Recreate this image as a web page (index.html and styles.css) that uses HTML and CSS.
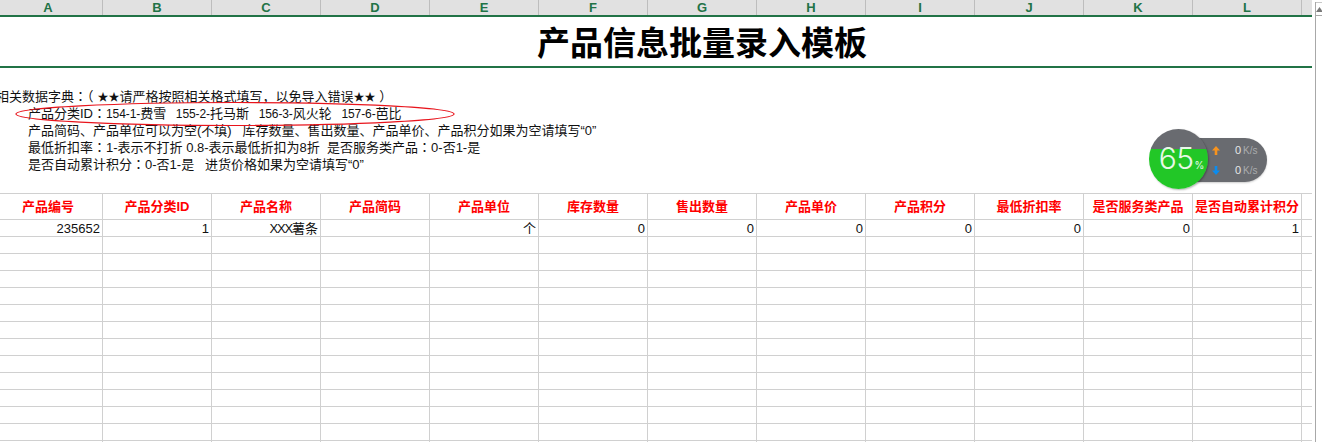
FILE: index.html
```html
<!DOCTYPE html>
<html lang="zh">
<head>
<meta charset="utf-8">
<title>产品信息批量录入模板</title>
<link rel="stylesheet" href="styles.css">
</head>
<body>
<div class="app">
  <div class="sheet">
    <div class="cols">
      <div class="col">A</div><div class="col">B</div><div class="col">C</div><div class="col">D</div><div class="col">E</div><div class="col">F</div><div class="col">G</div><div class="col">H</div><div class="col">I</div><div class="col">J</div><div class="col">K</div><div class="col">L</div><div class="col end"></div>
    </div>
    <div class="title">产品信息批量录入模板</div>
    <div class="notes">
      <div class="note first">相关数据字典<span class="colon" lang="zh-Hant">：</span>（<span class="star lead">★★</span>请严格按照相关格式填写，以免导入错误<span class="star">★★</span>&nbsp;）</div>
      <div class="note">产品分类ID<span class="colon" lang="zh-Hant">：</span><span class="lat">154-1-</span>费雪<span class="lat">&nbsp;&nbsp; 155-2-</span>托马斯<span class="lat">&nbsp;&nbsp; 156-3-</span>风火轮<span class="lat">&nbsp;&nbsp; 157-6-</span>芭比</div>
      <div class="note">产品简码、产品单位可以为空(不填)&nbsp;&nbsp; 库存数量、售出数量、产品单价、产品积分如果为空请填写“0”</div>
      <div class="note">最低折扣率<span class="colon" lang="zh-Hant">：</span>1-表示不打折 0.8-表示最低折扣为8折&nbsp; 是否服务类产品<span class="colon" lang="zh-Hant">：</span>0-否1-是</div>
      <div class="note">是否自动累计积分<span class="colon" lang="zh-Hant">：</span>0-否1-是&nbsp;&nbsp; 进货价格如果为空请填写“0”</div>
      <svg class="ellipse" width="460" height="30" viewBox="0 0 460 30"><ellipse cx="235" cy="15" rx="219" ry="11.5" fill="none" stroke="#e8141c" stroke-width="1.2"/></svg>
      <div class="widget">
        <div class="pill">
          <div class="speed"><svg class="arrow" width="8" height="9" viewBox="0 0 8 9"><path d="M4 0 8 4.5H5.3V9H2.7V4.5H0Z" fill="#f7931e"/></svg><span class="val">0</span><span class="unit">K/s</span></div>
          <div class="speed"><svg class="arrow" width="8" height="9" viewBox="0 0 8 9"><path d="M4 9 8 4.5H5.3V0H2.7V4.5H0Z" fill="#0a8cf0"/></svg><span class="val">0</span><span class="unit">K/s</span></div>
        </div>
        <div class="ball"><span class="pct">65</span><span class="sign">%</span></div>
      </div>
    </div>
    <div class="row head">
      <div class="cell">产品编号</div><div class="cell">产品分类ID</div><div class="cell">产品名称</div><div class="cell">产品简码</div><div class="cell">产品单位</div><div class="cell">库存数量</div><div class="cell">售出数量</div><div class="cell">产品单价</div><div class="cell">产品积分</div><div class="cell">最低折扣率</div><div class="cell">是否服务类产品</div><div class="cell">是否自动累计积分</div><div class="cell end"></div>
    </div>
    <div class="row">
      <div class="cell">235652</div><div class="cell">1</div><div class="cell"><span class="tight">XXX</span>薯条</div><div class="cell"></div><div class="cell">个</div><div class="cell">0</div><div class="cell">0</div><div class="cell">0</div><div class="cell">0</div><div class="cell">0</div><div class="cell">0</div><div class="cell">1</div><div class="cell end"></div>
    </div>
    <div class="row"><div class="cell"></div><div class="cell"></div><div class="cell"></div><div class="cell"></div><div class="cell"></div><div class="cell"></div><div class="cell"></div><div class="cell"></div><div class="cell"></div><div class="cell"></div><div class="cell"></div><div class="cell"></div><div class="cell end"></div></div>
    <div class="row"><div class="cell"></div><div class="cell"></div><div class="cell"></div><div class="cell"></div><div class="cell"></div><div class="cell"></div><div class="cell"></div><div class="cell"></div><div class="cell"></div><div class="cell"></div><div class="cell"></div><div class="cell"></div><div class="cell end"></div></div>
    <div class="row"><div class="cell"></div><div class="cell"></div><div class="cell"></div><div class="cell"></div><div class="cell"></div><div class="cell"></div><div class="cell"></div><div class="cell"></div><div class="cell"></div><div class="cell"></div><div class="cell"></div><div class="cell"></div><div class="cell end"></div></div>
    <div class="row"><div class="cell"></div><div class="cell"></div><div class="cell"></div><div class="cell"></div><div class="cell"></div><div class="cell"></div><div class="cell"></div><div class="cell"></div><div class="cell"></div><div class="cell"></div><div class="cell"></div><div class="cell"></div><div class="cell end"></div></div>
    <div class="row"><div class="cell"></div><div class="cell"></div><div class="cell"></div><div class="cell"></div><div class="cell"></div><div class="cell"></div><div class="cell"></div><div class="cell"></div><div class="cell"></div><div class="cell"></div><div class="cell"></div><div class="cell"></div><div class="cell end"></div></div>
    <div class="row"><div class="cell"></div><div class="cell"></div><div class="cell"></div><div class="cell"></div><div class="cell"></div><div class="cell"></div><div class="cell"></div><div class="cell"></div><div class="cell"></div><div class="cell"></div><div class="cell"></div><div class="cell"></div><div class="cell end"></div></div>
    <div class="row"><div class="cell"></div><div class="cell"></div><div class="cell"></div><div class="cell"></div><div class="cell"></div><div class="cell"></div><div class="cell"></div><div class="cell"></div><div class="cell"></div><div class="cell"></div><div class="cell"></div><div class="cell"></div><div class="cell end"></div></div>
    <div class="row"><div class="cell"></div><div class="cell"></div><div class="cell"></div><div class="cell"></div><div class="cell"></div><div class="cell"></div><div class="cell"></div><div class="cell"></div><div class="cell"></div><div class="cell"></div><div class="cell"></div><div class="cell"></div><div class="cell end"></div></div>
    <div class="row"><div class="cell"></div><div class="cell"></div><div class="cell"></div><div class="cell"></div><div class="cell"></div><div class="cell"></div><div class="cell"></div><div class="cell"></div><div class="cell"></div><div class="cell"></div><div class="cell"></div><div class="cell"></div><div class="cell end"></div></div>
    <div class="row"><div class="cell"></div><div class="cell"></div><div class="cell"></div><div class="cell"></div><div class="cell"></div><div class="cell"></div><div class="cell"></div><div class="cell"></div><div class="cell"></div><div class="cell"></div><div class="cell"></div><div class="cell"></div><div class="cell end"></div></div>
    <div class="row"><div class="cell"></div><div class="cell"></div><div class="cell"></div><div class="cell"></div><div class="cell"></div><div class="cell"></div><div class="cell"></div><div class="cell"></div><div class="cell"></div><div class="cell"></div><div class="cell"></div><div class="cell"></div><div class="cell end"></div></div>
    <div class="row"><div class="cell"></div><div class="cell"></div><div class="cell"></div><div class="cell"></div><div class="cell"></div><div class="cell"></div><div class="cell"></div><div class="cell"></div><div class="cell"></div><div class="cell"></div><div class="cell"></div><div class="cell"></div><div class="cell end"></div></div>
    <div class="row"><div class="cell"></div><div class="cell"></div><div class="cell"></div><div class="cell"></div><div class="cell"></div><div class="cell"></div><div class="cell"></div><div class="cell"></div><div class="cell"></div><div class="cell"></div><div class="cell"></div><div class="cell"></div><div class="cell end"></div></div>
  </div>
  <div class="scroll">
    <div class="gutter"></div>
    <div class="track"><div class="scroll-btn"><svg width="7" height="5" viewBox="0 0 7 5"><path d="M3.5 0 7 5H0Z" fill="#777"/></svg></div></div>
  </div>
</div>
</body>
</html>
```
FILE: styles.css
```css
html, body { margin: 0; padding: 0; background: #fff; }
body { width: 1322px; height: 442px; overflow: hidden; font-family: "Liberation Sans", "Noto Sans CJK SC", sans-serif; font-size: 13px; color: #111; }
.app { display: flex; height: 442px; overflow: hidden; }
.sheet { width: 1312px; flex: none; overflow: hidden; }
.cols { display: grid; grid-template-columns: 103px repeat(11, 109px) 1fr; height: 15px; background: #e1e1e1; }
.col { text-align: center; font-size: 13px; line-height: 16px; font-weight: 700; color: #217346; border-right: 1px solid #bdbdbd; box-sizing: border-box; overflow: hidden; }
.col:first-child { padding-right: 6px; }
.col.end { border-right: 0; }
.title { height: 49px; border-top: 2px solid #217346; border-bottom: 2px solid #217346; padding-left: 92px; text-align: center; font-size: 33px; font-weight: 700; line-height: 54px; color: #000; }
.notes { position: relative; height: 125px; box-sizing: border-box; padding-top: 20px; }
.note { height: 17px; line-height: 17px; padding-left: 28px; white-space: nowrap; font-size: 13px; }
.note.first { padding-left: 0; margin-left: -4px; }
.colon { font-family: "Noto Sans CJK TC", sans-serif; line-height: 0; }
.lat { font-size: 12px; letter-spacing: -.1px; line-height: 0; }
.tight { letter-spacing: -1.2px; }
.star { font-size: 11px; line-height: 0; }
.star.lead { margin-left: 4px; }
.ellipse { position: absolute; left: 0; top: 31px; }
.widget { position: absolute; left: 1149px; top: 61px; width: 120px; height: 60px; }
.pill { position: absolute; left: 30px; top: 9px; width: 88px; height: 44px; box-sizing: border-box; padding: 2px 0 0 33px; border-radius: 0 22px 22px 0; background: #696b70; box-shadow: 0 1px 2px rgba(0,0,0,.2); }
.speed { display: flex; align-items: center; height: 20px; }
.arrow { flex: none; }
.val { margin-left: 8px; width: 13px; text-align: right; font-size: 11px; color: #e6e6e6; }
.unit { margin-left: 2px; font-size: 10px; color: #a9abae; }
.ball { position: absolute; left: 0; top: 0; width: 59px; height: 60px; border-radius: 50%; background: linear-gradient(#696b70 0 20px, #22c727 20px); box-shadow: 1px 1px 2px rgba(0,0,0,.3); display: flex; align-items: baseline; justify-content: center; line-height: 59px; font-family: "Inter", "Liberation Sans", sans-serif; }
.pct { font-size: 30px; font-weight: 300; letter-spacing: -.5px; color: #e8f8e8; margin-left: 6px; }
.sign { font-size: 10px; color: #e8f8e8; margin-left: 1px; }
.row { display: grid; grid-template-columns: 103px repeat(11, 109px) 1fr; height: 17px; border-bottom: 1px solid #d0d0d0; box-sizing: border-box; }
.row.head { height: 27px; border-top: 1px solid #d0d0d0; }
.cell { border-right: 1px solid #d0d0d0; box-sizing: border-box; text-align: right; padding-right: 2px; line-height: 17px; font-size: 13px; white-space: nowrap; overflow: hidden; }
.cell.end { border-right: 0; }
.head .cell { text-align: center; padding: 0; color: #f00; font-weight: 700; line-height: 25px; }
.head .cell:first-child { padding-right: 6px; }
.scroll { flex: 1; display: flex; min-width: 0; }
.gutter { width: 1px; margin-top: 15px; background: #a8a8a8; }
.track { margin-left: 3px; flex: 1; border-left: 1px solid #a8a8a8; margin-top: 2px; }
.scroll-btn { height: 14px; display: flex; align-items: center; justify-content: center; background: #fff; border-top: 1px solid #c8c8c8; border-bottom: 1px solid #a8a8a8; box-sizing: border-box; }
```
